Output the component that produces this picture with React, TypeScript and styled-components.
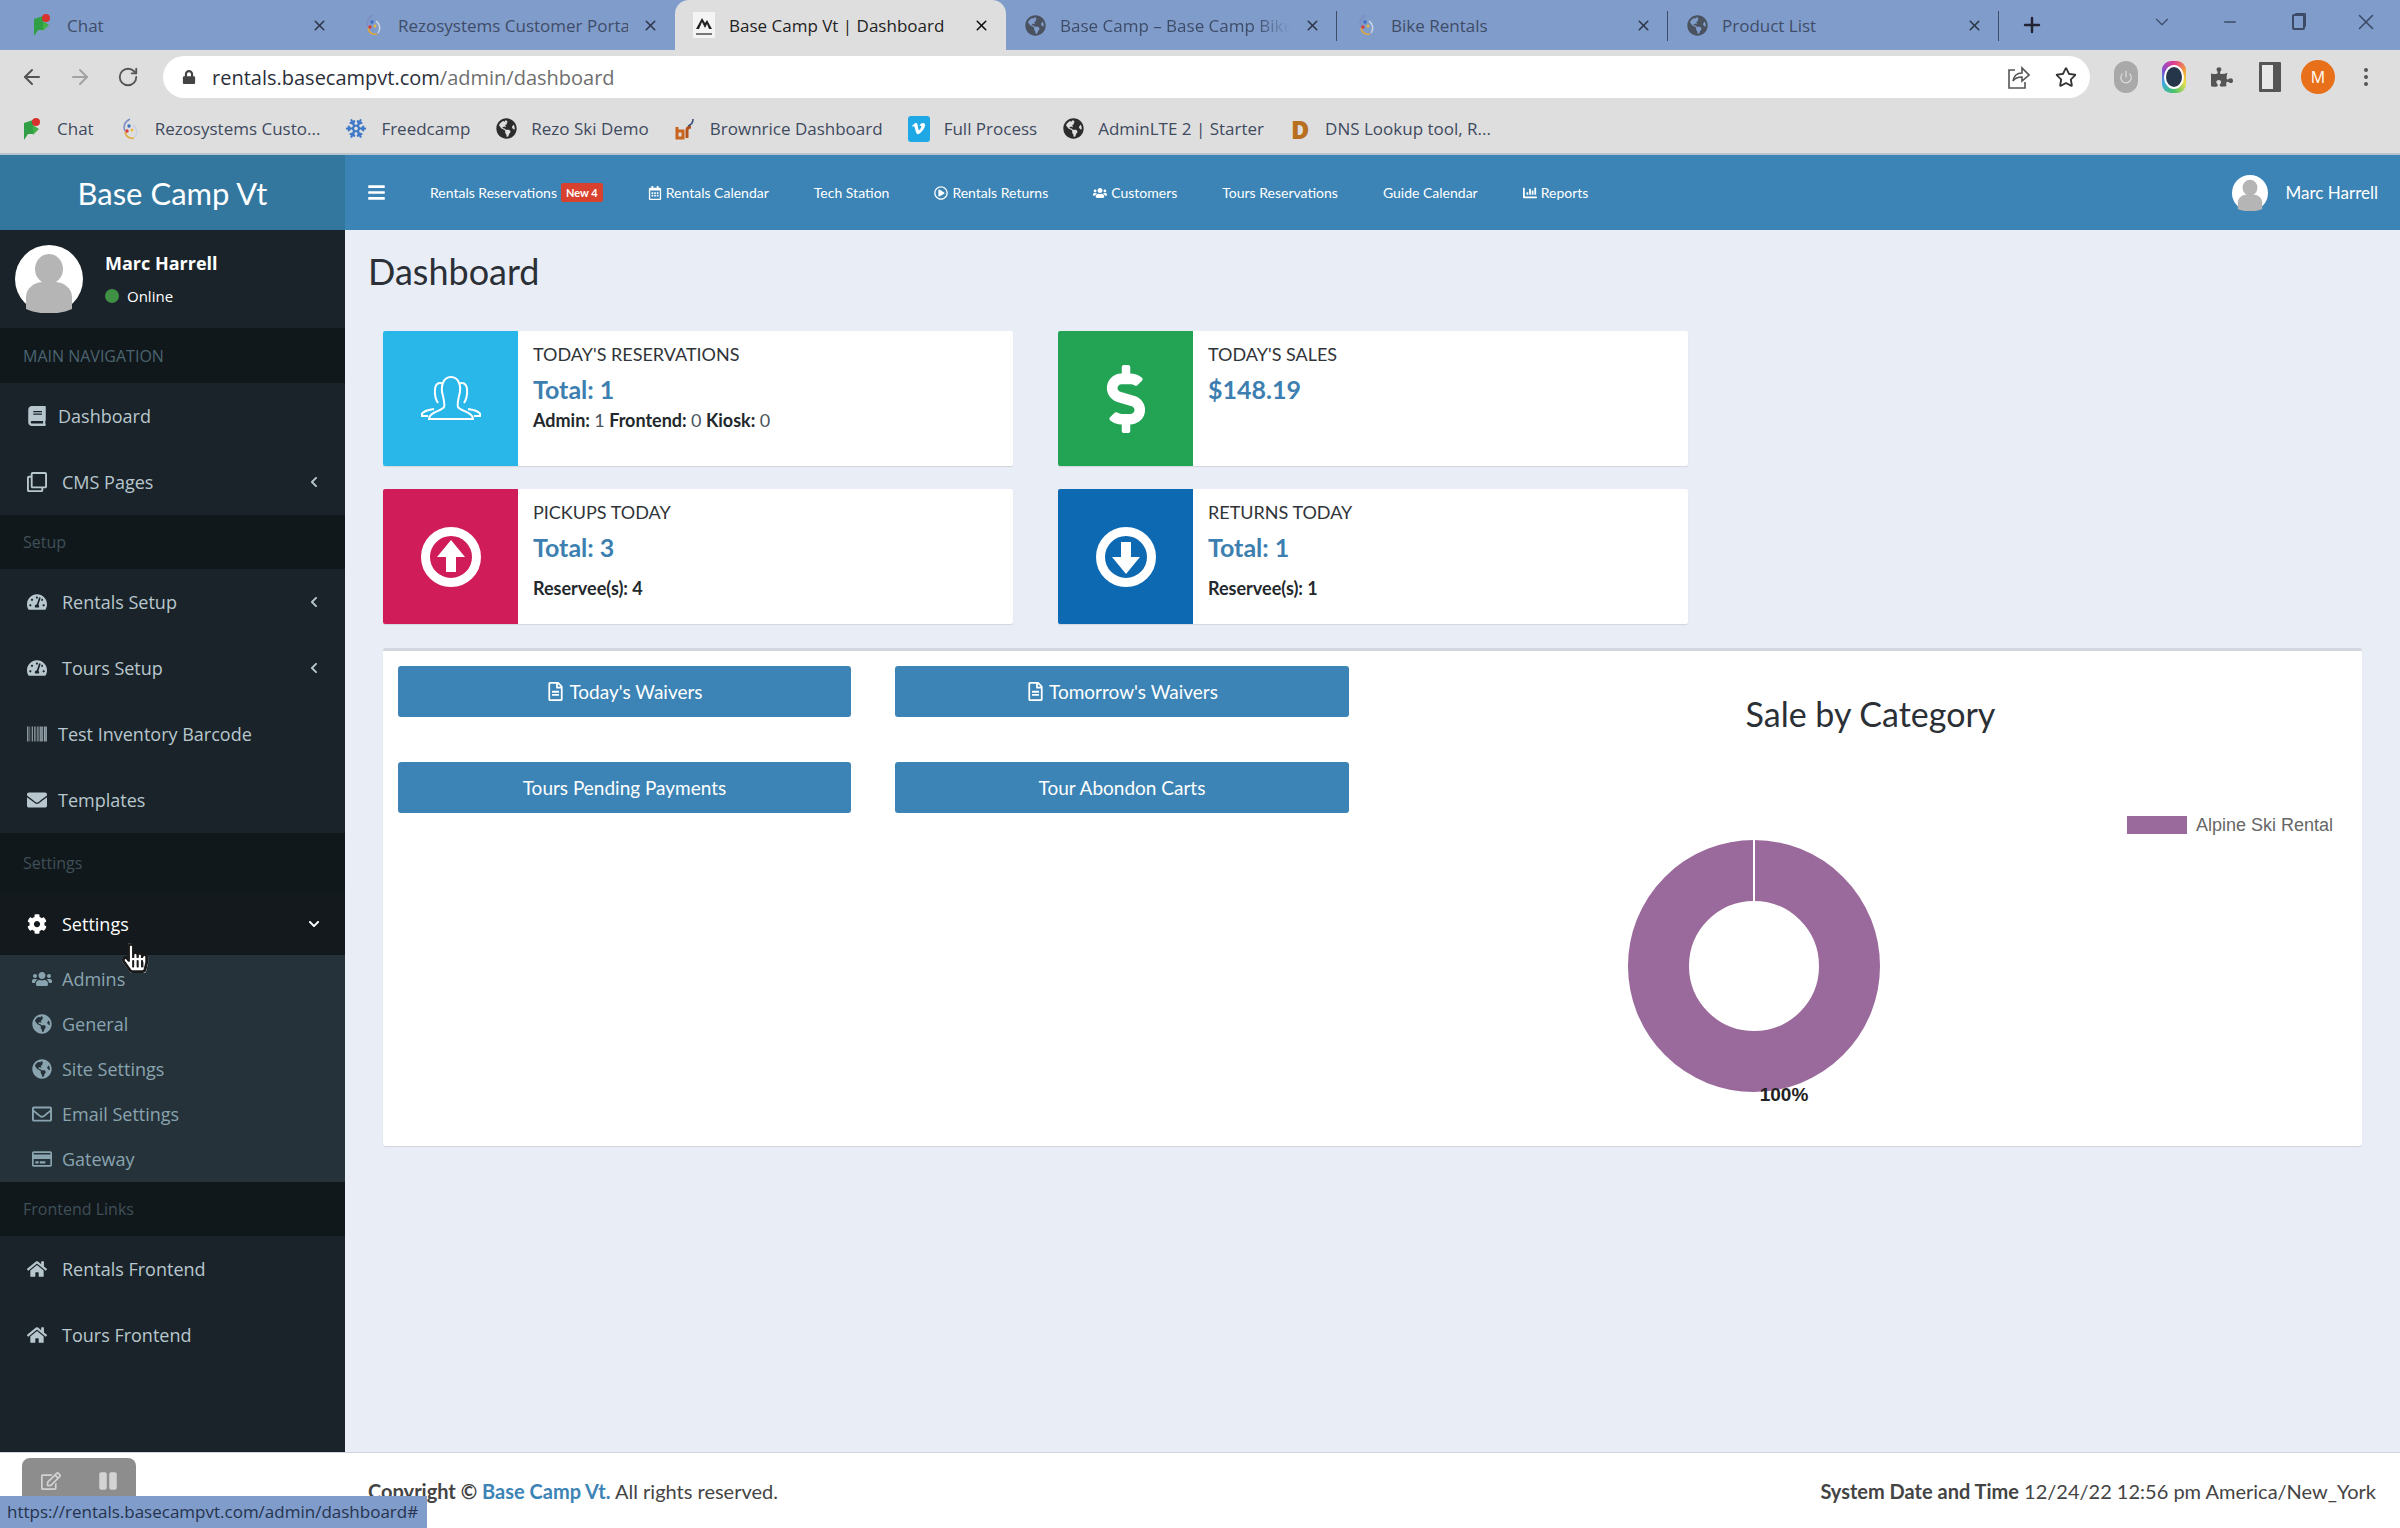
import React from "react";
import styled, { createGlobalStyle } from "styled-components";
import {
  FaBook,
  FaRegClone,
  FaTachometerAlt,
  FaBarcode,
  FaEnvelope,
  FaCog,
  FaUsers,
  FaGlobeAmericas,
  FaRegEnvelope,
  FaRegCreditCard,
  FaHome,
  FaRegFileAlt,
  FaRegCalendarAlt,
  FaChartBar,
  FaChevronLeft,
  FaChevronDown,
  FaDollarSign,
  FaPuzzlePiece,
  FaVimeoV,
  FaLock,
  FaRegStar,
  FaHandPointer,
  FaRegHandPointer,
  FaBars,
  FaRegPlayCircle,
  FaPause,
  FaRegEdit,
} from "react-icons/fa";
import { ArrowLeft, ArrowRight, RotateCw, X, Plus, ChevronDown, Minus, Snowflake, Power, MoreVertical } from "lucide-react";

const GlobalStyle = createGlobalStyle`
  html, body { margin: 0; padding: 0; height: 100%; }
  body { font-family: "Lato", "Liberation Sans", sans-serif; background: #e9edf5; }
  * { box-sizing: border-box; }
`;

const ChatIcon = () => (
  <svg width="22" height="24" viewBox="0 0 22 24">
    <path d="M3 6 L12 3 V17 L7 17 L3 23 Z" fill="#2f9e44" />
    <path d="M12 8 L18 12 L12 18 Z" fill="#43b04a" />
    <circle cx="15" cy="5" r="4" fill="#d9322e" />
  </svg>
);

const PinwheelIcon = () => (
  <svg width="22" height="24" viewBox="0 0 22 24" fill="none" strokeWidth="1.6">
    <path d="M11 2 C5 5 4 10 6 14" stroke="#7d8fc4" />
    <path d="M6 15 C7 20 11 22 15 21" stroke="#e0a83a" />
    <path d="M16 20 C19 16 18 11 14 8" stroke="#c9d1e2" />
    <circle cx="10" cy="9" r="1.7" fill="#3b6fc4" />
    <circle cx="8" cy="14" r="1.7" fill="#d93a3a" />
    <circle cx="13" cy="13" r="1.5" fill="#e7b93c" />
  </svg>
);

const CampIcon = () => (
  <svg width="22" height="26" viewBox="0 0 22 26">
    <rect width="22" height="26" fill="#f4f4f4" />
    <path d="M3 17 L9 6 L12 11 L14 8 L19 17 L16 17 L14 12 L12 16 L9 10 L6 17 Z" fill="#222" />
    <rect x="3" y="21" width="16" height="2" fill="#777" />
  </svg>
);

const BrowniceIcon = () => (
  <svg width="22" height="24" viewBox="0 0 22 24" fill="none" strokeWidth="3">
    <path d="M3 10 V21 H9 V14 H4" stroke="#c9641e" />
    <path d="M13 21 V13 C13 11 15 10 17 10" stroke="#b5521a" />
    <path d="M14 9 C17 8 19 6 19 2" stroke="#3a4f7a" strokeWidth="1.6" />
  </svg>
);

const PeopleOutline = () => (
  <svg width="60" height="60" viewBox="0 0 60 60" fill="none" stroke="#fff" strokeWidth="2">
    <path d="M22 27 C19 18 22 8 30 8 C38 8 41 18 38 27 C37 32 36 36 37 38 C39 42 52 43 52 50 H8 C8 43 21 42 23 38 C24 36 23 32 22 27 Z" />
    <path d="M17 34 C13 28 12 14 19 14 C20 14 21 14 22 15" />
    <path d="M43 34 C47 28 48 14 41 14 C40 14 39 14 38 15" />
    <path d="M13 40 C7 41 1 42 0 47 H7" />
    <path d="M47 40 C53 41 59 42 60 47 H53" />
  </svg>
);

const CircleArrow = ({ $down }: { $down?: boolean }) => (
  <svg width="60" height="60" viewBox="0 0 60 60">
    <circle cx="30" cy="30" r="25.5" fill="none" stroke="#fff" strokeWidth="9" />
    <path
      d="M30 13 L44 30 H35 V45 H25 V30 H16 Z"
      fill="#fff"
      transform={$down ? "rotate(180 30 30)" : undefined}
    />
  </svg>
);

const AvatarGlyph = () => (
  <svg viewBox="0 0 68 68" width="100%" height="100%">
    <circle cx="34" cy="34" r="34" fill="#fff" />
    <ellipse cx="34" cy="24" rx="14" ry="15" fill="#b5b5b5" />
    <path d="M11 64 V52 C11 43 20 37 28 37 H40 C48 37 57 43 57 52 V64 C45 70 23 70 11 64 Z" fill="#b5b5b5" />
  </svg>
);

const Page = styled.div`
  position: relative;
  width: 2400px;
  height: 1528px;
  display: flex;
  flex-direction: column;
  overflow: hidden;
`;

/* browser chrome */
const TabStrip = styled.div`
  height: 50px;
  background: #7f9ccb;
  display: flex;
  align-items: stretch;
  padding-left: 13px;
  font-family: "Open Sans", sans-serif;
`;

const Tab = styled.div<{ $active?: boolean; $sep?: boolean }>`
  width: 331px;
  display: flex;
  align-items: center;
  padding: 0 16px 0 18px;
  gap: 14px;
  font-size: 17px;
  white-space: nowrap;
  color: ${(p) => (p.$active ? "#222" : "#3f4c68")};
  background: ${(p) => (p.$active ? "#dedede" : "transparent")};
  border-radius: ${(p) => (p.$active ? "14px 14px 0 0" : "0")};
  position: relative;
  &::after {
    content: "";
    display: ${(p) => (p.$sep ? "block" : "none")};
    position: absolute;
    right: 0;
    top: 11px;
    bottom: 9px;
    width: 1px;
    background: #3f4c68;
  }
`;

const TabTitle = styled.span<{ $fade?: boolean }>`
  flex: 1;
  overflow: hidden;
  ${(p) => p.$fade && "mask-image: linear-gradient(90deg, #000 85%, transparent);"}
`;

const Favicon = styled.span`
  width: 22px;
  height: 26px;
  flex: none;
  display: flex;
  align-items: center;
  justify-content: center;
`;

const NewTab = styled.div`
  width: 66px;
  display: flex;
  align-items: center;
  justify-content: center;
  color: #223;
`;

const WindowControls = styled.div`
  margin-left: auto;
  display: flex;
  color: #3d4a66;
  margin-top: -6px;
`;

const WindowButton = styled.div`
  width: 68px;
  display: flex;
  align-items: center;
  justify-content: center;
`;

const RestoreGlyph = styled.span`
  width: 13px;
  height: 16px;
  border: 2px solid #3d4a66;
  border-radius: 2px;
  box-shadow: 2px -2px 0 -1px #3d4a66;
`;

const Toolbar = styled.div`
  height: 54px;
  background: #dedede;
  display: flex;
  align-items: center;
  padding: 0 10px 0 8px;
`;

const ToolButton = styled.div<{ $dim?: boolean }>`
  width: 48px;
  flex: none;
  display: flex;
  align-items: center;
  justify-content: center;
  color: ${(p) => (p.$dim ? "#a2a2a2" : "#555")};
`;

const AddressPill = styled.div`
  flex: 1;
  height: 42px;
  margin: 0 12px 0 11px;
  background: #fff;
  border-radius: 21px;
  display: flex;
  align-items: center;
  padding: 0 12px 0 19px;
  font-family: "Open Sans", sans-serif;
  font-size: 20px;
  color: #2b2f3a;
  gap: 16px;
`;

const UrlPath = styled.span`
  color: #6f6f6f;
`;

const PillIcons = styled.div`
  margin-left: auto;
  display: flex;
  gap: 24px;
  color: #555;
`;

const IconSlot = styled.span`
  width: 24px;
  height: 24px;
  display: flex;
  align-items: center;
  justify-content: center;
`;

const PowerBadge = styled.span`
  width: 24px;
  height: 32px;
  border-radius: 12px;
  background: #a9a9a9;
  color: #dedede;
  display: flex;
  align-items: center;
  justify-content: center;
`;

const LensBadge = styled.span`
  width: 24px;
  height: 32px;
  border-radius: 9px;
  background: conic-gradient(#e23c8f, #f2a33a, #e9e04a, #46c26a, #3fa9e0, #7a4fd0, #e23c8f);
  display: flex;
  align-items: center;
  justify-content: center;
  &::after {
    content: "";
    width: 16px;
    height: 20px;
    border-radius: 50%;
    background: #26364a;
    box-shadow: 0 0 0 2px #fff;
  }
`;

const PanelGlyph = styled.span`
  width: 22px;
  height: 30px;
  border: 3px solid #555;
  border-right-width: 8px;
  border-radius: 1px;
  background: #e8e8e8;
`;

const ProfileBadge = styled.span`
  width: 34px;
  height: 34px;
  border-radius: 50%;
  background: #e8701a;
  color: #fff;
  font-family: "Open Sans", sans-serif;
  font-size: 16px;
  display: flex;
  align-items: center;
  justify-content: center;
`;

const BookmarkBar = styled.div`
  height: 51px;
  background: #dedede;
  border-bottom: 2px solid #b9c3cc;
  display: flex;
  align-items: center;
  padding-left: 21px;
  gap: 25px;
  font-family: "Open Sans", sans-serif;
  font-size: 17px;
  color: #3e4a5e;
`;

const Bookmark = styled.div`
  display: flex;
  align-items: center;
  gap: 14px;
  white-space: nowrap;
`;

const VimeoTile = styled.span`
  width: 24px;
  height: 26px;
  border-radius: 3px;
  background: #1ea9e6;
  color: #fff;
  display: flex;
  align-items: center;
  justify-content: center;
`;

const LetterMark = styled.span`
  font-family: "Open Sans", sans-serif;
  font-weight: 800;
  font-size: 25px;
  color: #b8701f;
`;

/* app header */
const AppHeader = styled.header`
  height: 75px;
  display: flex;
  background: #3c84b5;
  color: #fff;
`;

const Logo = styled.div`
  width: 345px;
  flex: none;
  background: #33779f;
  display: flex;
  align-items: center;
  justify-content: center;
  font-size: 31px;
`;

const HeaderNav = styled.nav`
  flex: 1;
  display: flex;
  align-items: center;
  font-size: 14px;
  padding-left: 22px;
`;

const MenuToggle = styled.span`
  width: 63px;
  display: flex;
  font-size: 19px;
`;

const NavLink = styled.a`
  display: flex;
  align-items: center;
  gap: 4px;
  margin-right: 45px;
  white-space: nowrap;
`;

const NewBadge = styled.span`
  background: #d9412f;
  color: #fff;
  font-size: 11px;
  font-weight: 700;
  padding: 3px 5px;
  border-radius: 2px;
`;

const HeaderUser = styled.div`
  margin-left: auto;
  margin-right: 22px;
  display: flex;
  align-items: center;
  gap: 18px;
  font-size: 17px;
`;

const HeaderAvatar = styled.span`
  width: 36px;
  height: 36px;
  display: block;
`;

/* body */
const Body = styled.div`
  flex: 1;
  display: flex;
  min-height: 0;
`;

const Sidebar = styled.aside`
  width: 345px;
  flex: none;
  background: #1a2329;
  font-family: "Open Sans", sans-serif;
  font-size: 18px;
  color: #b8c7ce;
`;

const UserPanel = styled.div`
  height: 98px;
  display: flex;
  padding: 15px 0 0 15px;
  gap: 22px;
`;

const SideAvatar = styled.span`
  width: 68px;
  height: 68px;
  display: block;
`;

const UserName = styled.div`
  color: #fff;
  font-weight: 700;
  font-size: 18px;
  margin-top: 6px;
`;

const UserStatus = styled.div`
  display: flex;
  align-items: center;
  gap: 8px;
  color: #fff;
  font-size: 15px;
  margin-top: 11px;
`;

const StatusDot = styled.span`
  width: 14px;
  height: 14px;
  border-radius: 50%;
  background: #3f8f45;
`;

const Band = styled.div<{ $h: number; $upper?: boolean }>`
  height: ${(p) => p.$h}px;
  background: #11181c;
  display: flex;
  align-items: center;
  padding-left: 23px;
  color: ${(p) => (p.$upper ? "#4b646f" : "#3f4f57")};
  font-size: 16px;
`;

const MenuRow = styled.a<{ $open?: boolean; $h?: number; $narrow?: boolean }>`
  height: ${(p) => p.$h ?? 66}px;
  display: flex;
  align-items: center;
  padding: 0 25px 0 26px;
  gap: ${(p) => (p.$narrow ? "10px" : "14px")};
  color: ${(p) => (p.$open ? "#fff" : "#b8c7ce")};
  background: ${(p) => (p.$open ? "#13191d" : "transparent")};
`;

const MenuIcon = styled.span`
  width: 22px;
  flex: none;
  display: flex;
  justify-content: center;
  font-size: 20px;
`;

const MenuChevron = styled.span`
  margin-left: auto;
  display: flex;
  font-size: 12px;
`;

const SubMenu = styled.div`
  height: 227px;
  background: #25323a;
  padding-top: 1px;
`;

const SubRow = styled.a`
  height: 45px;
  display: flex;
  align-items: center;
  padding-left: 31px;
  gap: 9px;
  color: #8aa4af;
`;

const Content = styled.main`
  flex: 1;
  padding: 0 38px 0 38px;
  min-width: 0;
`;

const PageTitle = styled.h1`
  margin: 0;
  margin-left: -15px;
  padding-top: 18px;
  height: 101px;
  font-size: 36px;
  font-weight: 400;
  color: #2b2f36;
  line-height: 46px;
`;

const StatGrid = styled.div`
  display: grid;
  grid-template-columns: 630px 630px;
  grid-auto-rows: 135px;
  gap: 23px 45px;
`;

const StatCard = styled.div`
  display: flex;
  background: #fff;
  border-radius: 2px;
  box-shadow: 0 1px 1px rgba(0, 0, 0, 0.1);
  overflow: hidden;
`;

const StatIcon = styled.div<{ $bg: string }>`
  width: 135px;
  flex: none;
  background: ${(p) => p.$bg};
  color: #fff;
  display: flex;
  align-items: center;
  justify-content: center;
`;

const StatBody = styled.div`
  padding: 10px 15px;
`;

const StatTitle = styled.div`
  font-size: 18px;
  line-height: 26px;
  color: #2f3438;
`;

const StatValue = styled.div`
  font-size: 25px;
  font-weight: 700;
  line-height: 32px;
  margin-top: 6px;
  color: #3c7fb0;
`;

const StatNote = styled.div<{ $gap: number }>`
  font-size: 18px;
  line-height: 24px;
  margin-top: ${(p) => p.$gap}px;
  color: #23282c;
  font-weight: 700;
`;

const LightNum = styled.span`
  font-weight: 400;
  color: #4a5560;
`;

const Panel = styled.section`
  margin-top: 24px;
  height: 498px;
  display: flex;
  background: #fff;
  border-top: 3px solid #d2d6de;
  border-radius: 3px;
  box-shadow: 0 1px 1px rgba(0, 0, 0, 0.1);
`;

const ActionGrid = styled.div`
  width: 996px;
  flex: none;
  padding: 15px 0 0 15px;
  display: grid;
  grid-template-columns: 453px 454px;
  grid-auto-rows: 51px;
  gap: 45px 44px;
`;

const ActionButton = styled.a`
  display: flex;
  align-items: center;
  justify-content: center;
  gap: 4px;
  background: #3c84b5;
  color: #fff;
  font-size: 19px;
  border-radius: 3px;
`;

const ChartColumn = styled.div`
  flex: 1;
  min-width: 0;
`;

const ChartTitle = styled.h3`
  margin: 0;
  height: 109px;
  padding-top: 41px;
  text-align: center;
  font-size: 34px;
  font-weight: 400;
  line-height: 44px;
  color: #2b2f36;
`;

/* footer */
const Footer = styled.footer`
  height: 76px;
  flex: none;
  background: #fff;
  border-top: 1px solid #d2d6de;
  display: flex;
  justify-content: space-between;
  align-items: center;
  padding: 0 24px 0 368px;
  font-size: 20px;
  color: #444;
`;

const FooterLink = styled.a`
  color: #3c84b5;
  font-weight: 700;
`;

/* overlays */
const RecorderBar = styled.div`
  position: absolute;
  left: 22px;
  top: 1458px;
  width: 114px;
  height: 46px;
  border-radius: 8px;
  background: #8d8d8d;
  display: flex;
  align-items: center;
  justify-content: space-around;
  color: #d3d3d3;
  font-size: 20px;
`;

const StatusBubble = styled.div`
  position: absolute;
  left: 0;
  bottom: 0;
  width: 427px;
  height: 32px;
  background: #7f9ccb;
  color: #26334d;
  font-family: "Open Sans", sans-serif;
  font-size: 17px;
  line-height: 32px;
  padding-left: 7px;
  white-space: nowrap;
`;

const Pointer = styled.div`
  position: absolute;
  left: 120px;
  top: 943px;
  width: 26px;
  height: 34px;
  font-size: 30px;
  color: #fff;
  & > svg {
    position: absolute;
    left: 0;
    top: 0;
  }
  & > svg + svg {
    color: #1a1a1a;
  }
`;

const tabs = [
  { title: "Chat", icon: <ChatIcon />, sep: false },
  { title: "Rezosystems Customer Portal", icon: <PinwheelIcon />, sep: false },
  { title: "Base Camp Vt | Dashboard", icon: <CampIcon />, active: true },
  { title: "Base Camp – Base Camp Bike", icon: <FaGlobeAmericas size={21} color="#4a5260" />, sep: true, fade: true },
  { title: "Bike Rentals", icon: <PinwheelIcon />, sep: true },
  { title: "Product List", icon: <FaGlobeAmericas size={21} color="#4a5260" />, sep: true },
];

const bookmarks = [
  { label: "Chat", icon: <ChatIcon /> },
  { label: "Rezosystems Custo...", icon: <PinwheelIcon /> },
  { label: "Freedcamp", icon: <Snowflake size={23} color="#3f78c8" strokeWidth={2.4} /> },
  { label: "Rezo Ski Demo", icon: <FaGlobeAmericas size={21} color="#2c2c2c" /> },
  { label: "Brownrice Dashboard", icon: <BrowniceIcon /> },
  { label: "Full Process", icon: <VimeoTile><FaVimeoV size={15} /></VimeoTile> },
  { label: "AdminLTE 2 | Starter", icon: <FaGlobeAmericas size={21} color="#2c2c2c" /> },
  { label: "DNS Lookup tool, R...", icon: <LetterMark>D</LetterMark> },
];

const subItems = [
  { label: "Admins", icon: <FaUsers /> },
  { label: "General", icon: <FaGlobeAmericas /> },
  { label: "Site Settings", icon: <FaGlobeAmericas /> },
  { label: "Email Settings", icon: <FaRegEnvelope /> },
  { label: "Gateway", icon: <FaRegCreditCard /> },
];

export default function App() {
  return (
    <Page>
      <GlobalStyle />
      <TabStrip>
        {tabs.map((tab) => (
          <Tab key={tab.title} $active={tab.active} $sep={tab.sep}>
            <Favicon>{tab.icon}</Favicon>
            <TabTitle $fade={tab.fade}>{tab.title}</TabTitle>
            <X size={17} strokeWidth={2.2} color={tab.active ? "#111" : "#2e3648"} />
          </Tab>
        ))}
        <NewTab>
          <Plus size={24} strokeWidth={2.4} />
        </NewTab>
        <WindowControls>
          <WindowButton><ChevronDown size={22} strokeWidth={1.2} /></WindowButton>
          <WindowButton><Minus size={18} /></WindowButton>
          <WindowButton><RestoreGlyph /></WindowButton>
          <WindowButton><X size={26} strokeWidth={1.4} /></WindowButton>
        </WindowControls>
      </TabStrip>

      <Toolbar>
        <ToolButton><ArrowLeft size={24} /></ToolButton>
        <ToolButton $dim><ArrowRight size={24} /></ToolButton>
        <ToolButton><RotateCw size={22} /></ToolButton>
        <AddressPill>
          <FaLock size={14} color="#444" />
          <span>
            rentals.basecampvt.com<UrlPath>/admin/dashboard</UrlPath>
          </span>
          <PillIcons>
            <IconSlot>
              <svg width="24" height="26" viewBox="0 0 24 26" fill="none" stroke="#555" strokeWidth="1.6">
                <path d="M9 6 H3 V24 H19 V18" />
                <path d="M7 17 C8 11 12 9 16 9 V4 L23 11 L16 17 V13 C12 13 9 14 7 17 Z" />
              </svg>
            </IconSlot>
            <IconSlot><FaRegStar size={22} color="#333" /></IconSlot>
          </PillIcons>
        </AddressPill>
        <ToolButton><PowerBadge><Power size={14} /></PowerBadge></ToolButton>
        <ToolButton><LensBadge /></ToolButton>
        <ToolButton><FaPuzzlePiece size={22} color="#555" /></ToolButton>
        <ToolButton><PanelGlyph /></ToolButton>
        <ToolButton><ProfileBadge>M</ProfileBadge></ToolButton>
        <ToolButton><MoreVertical size={24} /></ToolButton>
      </Toolbar>

      <BookmarkBar>
        {bookmarks.map((b) => (
          <Bookmark key={b.label}>
            <Favicon>{b.icon}</Favicon>
            {b.label}
          </Bookmark>
        ))}
      </BookmarkBar>

      <AppHeader>
        <Logo>Base Camp Vt</Logo>
        <HeaderNav>
          <MenuToggle><FaBars /></MenuToggle>
          <NavLink>Rentals Reservations <NewBadge>New 4</NewBadge></NavLink>
          <NavLink><FaRegCalendarAlt />Rentals Calendar</NavLink>
          <NavLink>Tech Station</NavLink>
          <NavLink><FaRegPlayCircle />Rentals Returns</NavLink>
          <NavLink><FaUsers />Customers</NavLink>
          <NavLink>Tours Reservations</NavLink>
          <NavLink>Guide Calendar</NavLink>
          <NavLink><FaChartBar />Reports</NavLink>
          <HeaderUser>
            <HeaderAvatar><AvatarGlyph /></HeaderAvatar>
            Marc Harrell
          </HeaderUser>
        </HeaderNav>
      </AppHeader>

      <Body>
        <Sidebar>
          <UserPanel>
            <SideAvatar><AvatarGlyph /></SideAvatar>
            <div>
              <UserName>Marc Harrell</UserName>
              <UserStatus><StatusDot />Online</UserStatus>
            </div>
          </UserPanel>
          <Band $h={55} $upper>MAIN NAVIGATION</Band>
          <MenuRow $narrow><MenuIcon><FaBook /></MenuIcon>Dashboard</MenuRow>
          <MenuRow><MenuIcon><FaRegClone /></MenuIcon>CMS Pages<MenuChevron><FaChevronLeft /></MenuChevron></MenuRow>
          <Band $h={54}>Setup</Band>
          <MenuRow><MenuIcon><FaTachometerAlt /></MenuIcon>Rentals Setup<MenuChevron><FaChevronLeft /></MenuChevron></MenuRow>
          <MenuRow><MenuIcon><FaTachometerAlt /></MenuIcon>Tours Setup<MenuChevron><FaChevronLeft /></MenuChevron></MenuRow>
          <MenuRow $narrow><MenuIcon><FaBarcode /></MenuIcon>Test Inventory Barcode</MenuRow>
          <MenuRow $narrow><MenuIcon><FaEnvelope /></MenuIcon>Templates</MenuRow>
          <Band $h={59}>Settings</Band>
          <MenuRow $open $h={63}><MenuIcon><FaCog /></MenuIcon>Settings<MenuChevron><FaChevronDown /></MenuChevron></MenuRow>
          <SubMenu>
            {subItems.map((item) => (
              <SubRow key={item.label}>
                <MenuIcon>{item.icon}</MenuIcon>
                {item.label}
              </SubRow>
            ))}
          </SubMenu>
          <Band $h={54}>Frontend Links</Band>
          <MenuRow><MenuIcon><FaHome /></MenuIcon>Rentals Frontend</MenuRow>
          <MenuRow><MenuIcon><FaHome /></MenuIcon>Tours Frontend</MenuRow>
        </Sidebar>

        <Content>
          <PageTitle>Dashboard</PageTitle>
          <StatGrid>
            <StatCard>
              <StatIcon $bg="#29b7ea"><PeopleOutline /></StatIcon>
              <StatBody>
                <StatTitle>TODAY'S RESERVATIONS</StatTitle>
                <StatValue>Total: 1</StatValue>
                <StatNote $gap={3}>
                  Admin: <LightNum>1</LightNum> Frontend: <LightNum>0</LightNum> Kiosk: <LightNum>0</LightNum>
                </StatNote>
              </StatBody>
            </StatCard>
            <StatCard>
              <StatIcon $bg="#23a455"><FaDollarSign size={68} /></StatIcon>
              <StatBody>
                <StatTitle>TODAY'S SALES</StatTitle>
                <StatValue>$148.19</StatValue>
              </StatBody>
            </StatCard>
            <StatCard>
              <StatIcon $bg="#d01c58"><CircleArrow /></StatIcon>
              <StatBody>
                <StatTitle>PICKUPS TODAY</StatTitle>
                <StatValue>Total: 3</StatValue>
                <StatNote $gap={13}>Reservee(s): 4</StatNote>
              </StatBody>
            </StatCard>
            <StatCard>
              <StatIcon $bg="#0d69b2"><CircleArrow $down /></StatIcon>
              <StatBody>
                <StatTitle>RETURNS TODAY</StatTitle>
                <StatValue>Total: 1</StatValue>
                <StatNote $gap={13}>Reservee(s): 1</StatNote>
              </StatBody>
            </StatCard>
          </StatGrid>

          <Panel>
            <ActionGrid>
              <ActionButton><FaRegFileAlt />Today's Waivers</ActionButton>
              <ActionButton><FaRegFileAlt />Tomorrow's Waivers</ActionButton>
              <ActionButton>Tours Pending Payments</ActionButton>
              <ActionButton>Tour Abondon Carts</ActionButton>
            </ActionGrid>
            <ChartColumn>
              <ChartTitle>Sale by Category</ChartTitle>
              <svg width="984" height="380" viewBox="0 0 984 380">
                <circle cx="375" cy="206" r="95.5" fill="none" stroke="#9b6a9c" strokeWidth="61" />
                <rect x="374" y="79" width="2" height="62" fill="#fff" />
                <text x="405" y="341" textAnchor="middle" fontFamily="Liberation Sans" fontWeight="700" fontSize="19" fill="#222">100%</text>
                <rect x="748" y="56" width="60" height="18" fill="#9b6a9c" />
                <text x="817" y="71" fontFamily="Liberation Sans" fontSize="18" fill="#666">Alpine Ski Rental</text>
              </svg>
            </ChartColumn>
          </Panel>
        </Content>
      </Body>

      <Footer>
        <span>
          <b>Copyright © <FooterLink>Base Camp Vt.</FooterLink></b> All rights reserved.
        </span>
        <span>
          <b>System Date and Time</b> 12/24/22 12:56 pm America/New_York
        </span>
      </Footer>

      <Pointer>
        <FaHandPointer />
        <FaRegHandPointer />
      </Pointer>
      <RecorderBar>
        <FaRegEdit />
        <FaPause />
      </RecorderBar>
      <StatusBubble>https://rentals.basecampvt.com/admin/dashboard#</StatusBubble>
    </Page>
  );
}
